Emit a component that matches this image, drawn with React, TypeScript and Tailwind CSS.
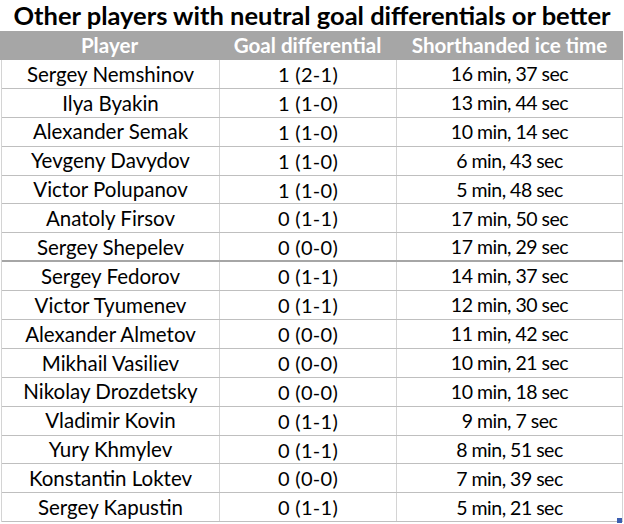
import React from 'react';

type Row = { name: string; diff: string; time: string };

const rows: Row[] = [
  { name: 'Sergey Nemshinov', diff: '1 (2-1)', time: '16 min, 37 sec' },
  { name: 'Ilya Byakin', diff: '1 (1-0)', time: '13 min, 44 sec' },
  { name: 'Alexander Semak', diff: '1 (1-0)', time: '10 min, 14 sec' },
  { name: 'Yevgeny Davydov', diff: '1 (1-0)', time: '6 min, 43 sec' },
  { name: 'Victor Polupanov', diff: '1 (1-0)', time: '5 min, 48 sec' },
  { name: 'Anatoly Firsov', diff: '0 (1-1)', time: '17 min, 50 sec' },
  { name: 'Sergey Shepelev', diff: '0 (0-0)', time: '17 min, 29 sec' },
  { name: 'Sergey Fedorov', diff: '0 (1-1)', time: '14 min, 37 sec' },
  { name: 'Victor Tyumenev', diff: '0 (1-1)', time: '12 min, 30 sec' },
  { name: 'Alexander Almetov', diff: '0 (0-0)', time: '11 min, 42 sec' },
  { name: 'Mikhail Vasiliev', diff: '0 (0-0)', time: '10 min, 21 sec' },
  { name: 'Nikolay Drozdetsky', diff: '0 (0-0)', time: '10 min, 18 sec' },
  { name: 'Vladimir Kovin', diff: '0 (1-1)', time: '9 min, 7 sec' },
  { name: 'Yury Khmylev', diff: '0 (1-1)', time: '8 min, 51 sec' },
  { name: 'Konstantin Loktev', diff: '0 (0-0)', time: '7 min, 39 sec' },
  { name: 'Sergey Kapustin', diff: '0 (1-1)', time: '5 min, 21 sec' },
];

export default function App() {
  return (
    <div className="relative w-[624px] h-[524px] bg-white font-['Lato','Liberation_Sans',sans-serif] text-black overflow-hidden">
      {/* title */}
      <div className="h-[31px] flex items-center justify-center text-[25.5px] font-bold leading-none">
        Other players with neutral goal differentials or better
      </div>

      {/* header */}
      <div className="w-[623px] h-[29px] bg-[#a6a6a6] text-white font-bold text-[20.6px] grid grid-cols-[219px_177px_227px] items-center text-center leading-none">
        <div>Player</div>
        <div>Goal differential</div>
        <div>Shorthanded ice time</div>
      </div>

      {/* body */}
      <div className="ml-[1px] w-[622px] border-l border-[#d4d4d4]">
        {rows.map((r, i) => (
          <div
            key={r.name}
            className={
              'grid grid-cols-[218px_177px_226px] h-[28.9px] leading-none ' +
              (i === 6 ? 'border-b-2 border-[#a6a6a6]' : 'border-b border-[#bfbfbf]')
            }
          >
            <div className="flex items-center justify-center border-r border-[#d4d4d4] text-[20.5px]">{r.name}</div>
            <div className="flex items-center justify-center border-r border-[#d4d4d4] text-[20px] tracking-[0.3px]">{r.diff}</div>
            <div className="flex items-center justify-center border-r border-[#d4d4d4] text-[19.5px] tracking-[-0.5px]">{r.time}</div>
          </div>
        ))}
      </div>

      {/* excel fill handle */}
      <div className="absolute right-[2px] bottom-[1px] w-[5px] h-[5px] bg-[#3c5fb0]" />
    </div>
  );
}
